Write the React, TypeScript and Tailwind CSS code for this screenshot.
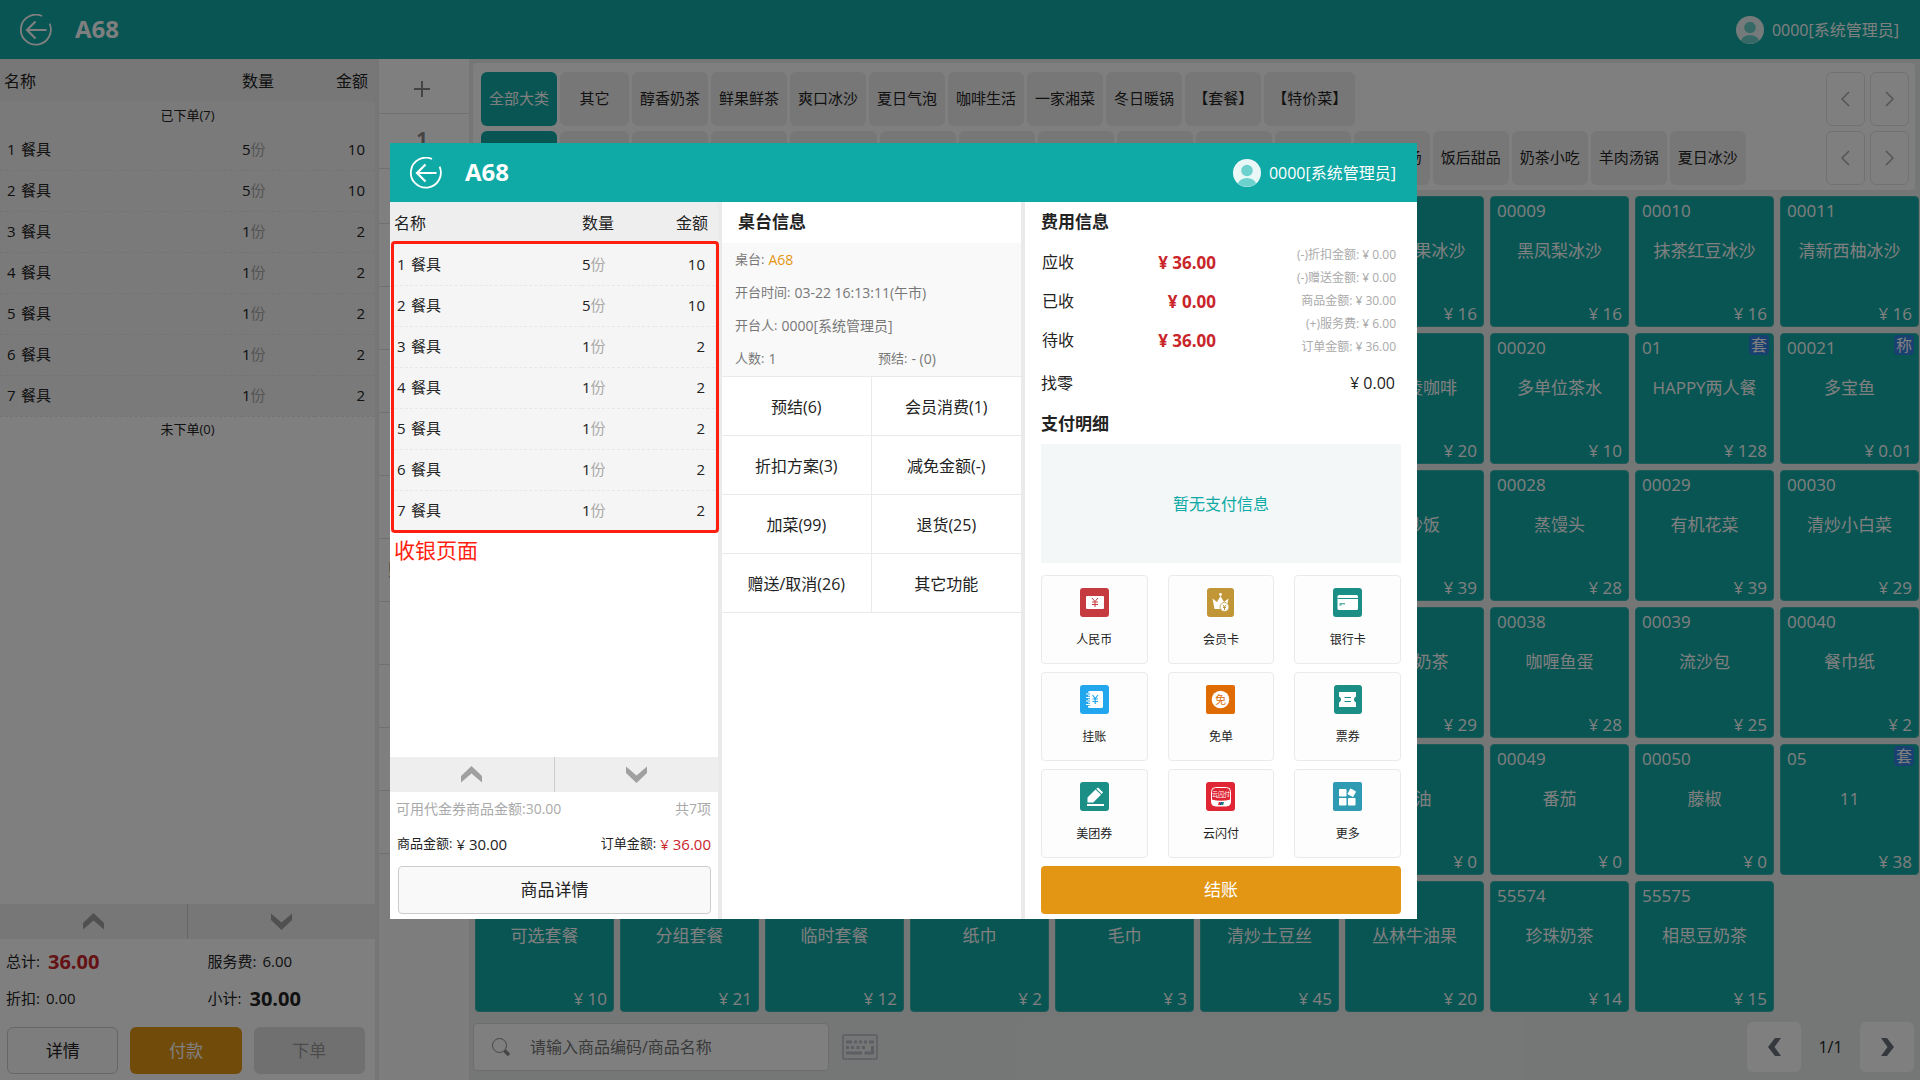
import type { ReactNode } from 'react'
import clsx from 'clsx'

const orders = [
  { name: '餐具', qty: 5, amount: 10 },
  { name: '餐具', qty: 5, amount: 10 },
  { name: '餐具', qty: 1, amount: 2 },
  { name: '餐具', qty: 1, amount: 2 },
  { name: '餐具', qty: 1, amount: 2 },
  { name: '餐具', qty: 1, amount: 2 },
  { name: '餐具', qty: 1, amount: 2 },
]

const sideActions = ['2', '3', '加料', '做法', '备注', '改价', '赠送菜品', '退菜', '催菜', '挂起', '转台']

const categories = [
  '全部大类',
  '其它',
  '醇香奶茶',
  '鲜果鲜茶',
  '爽口冰沙',
  '夏日气泡',
  '咖啡生活',
  '一家湘菜',
  '冬日暖锅',
  '【套餐】',
  '【特价菜】',
]

const subCategories = [
  '全部小类',
  '其它',
  '醇香奶茶',
  '鲜果鲜茶',
  'COOL饮品',
  '夏日气泡',
  '咖啡生活',
  '一家湘菜',
  '冬日暖锅',
  '精品小炒',
  '滋补靓汤',
  '暖胃锅汤',
  '饭后甜品',
  '奶茶小吃',
  '羊肉汤锅',
  '夏日冰沙',
]

type Dish = [code: string, name: string, price: string, tag?: string]

const dishes: Dish[] = [
  ['00002', '醇香奶茶', '12'],
  ['00003', '红豆奶茶', '13'],
  ['00004', '布丁奶茶', '13'],
  ['00005', '椰果奶茶', '13'],
  ['00006', '柠檬红茶', '12'],
  ['00007', '金桔绿茶', '12'],
  ['00008', '鲜榨芒果冰沙', '16'],
  ['00009', '黑凤梨冰沙', '16'],
  ['00010', '抹茶红豆冰沙', '16'],
  ['00011', '清新西柚冰沙', '16'],
  ['00012', '蓝柑气泡', '18'],
  ['00013', '青柠气泡', '18'],
  ['00014', '蜜桃气泡', '18'],
  ['00015', '美式咖啡', '18'],
  ['00016', '拿铁咖啡', '20'],
  ['00017', '焦糖玛奇朵', '22'],
  ['00018', '冰淇凌咖啡', '20'],
  ['00020', '多单位茶水', '10'],
  ['01', 'HAPPY两人餐', '128', '套'],
  ['00021', '多宝鱼', '0.01', '称'],
  ['00022', '小炒黄牛肉', '58'],
  ['00023', '剁椒鱼头', '68'],
  ['00024', '农家小炒肉', '39'],
  ['00025', '手撕包菜', '22'],
  ['00026', '红烧茄子', '26'],
  ['00031', '酸辣土豆丝', '20'],
  ['00027', '蛋炒饭', '39'],
  ['00028', '蒸馒头', '28'],
  ['00029', '有机花菜', '39'],
  ['00030', '清炒小白菜', '29'],
  ['00032', '羊肉汤', '48'],
  ['00033', '牛肉丸', '32'],
  ['00034', '毛肚', '36'],
  ['00035', '鸭血', '18'],
  ['00036', '虾滑', '38'],
  ['00041', '冻豆腐', '12'],
  ['00037', '原味奶茶', '29'],
  ['00038', '咖喱鱼蛋', '28'],
  ['00039', '流沙包', '25'],
  ['00040', '餐巾纸', '2'],
  ['00042', '香菜', '0'],
  ['00043', '葱花', '0'],
  ['00044', '蒜泥', '0'],
  ['00045', '小米椒', '0'],
  ['00046', '香醋', '0'],
  ['00047', '麻酱', '0'],
  ['00048', '酱油', '0'],
  ['00049', '番茄', '0'],
  ['00050', '藤椒', '0'],
  ['05', '11', '38', '套'],
  ['06', '可选套餐', '10'],
  ['07', '分组套餐', '21'],
  ['08', '临时套餐', '12'],
  ['55570', '纸巾', '2'],
  ['55571', '毛巾', '3'],
  ['55572', '清炒土豆丝', '45'],
  ['55573', '丛林牛油果', '20'],
  ['55574', '珍珠奶茶', '14'],
  ['55575', '相思豆奶茶', '15'],
]

const tableActions = [
  '预结(6)',
  '会员消费(1)',
  '折扣方案(3)',
  '减免金额(-)',
  '加菜(99)',
  '退货(25)',
  '赠送/取消(26)',
  '其它功能',
]

const feeDetails = [
  ['(-)折扣金额', '0.00'],
  ['(-)赠送金额', '0.00'],
  ['商品金额', '30.00'],
  ['(+)服务费', '6.00'],
  ['订单金额', '36.00'],
]

const payments: { label: string; icon: ReactNode }[] = [
  {
    label: '人民币',
    icon: (
      <>
        <rect width="29" height="29" rx="3" fill="#c53b3f" />
        <rect x="6" y="8" width="18" height="13" rx="1" fill="#fff" />
        <path d="M12 10l3 3.5 3-3.5M15 13.500v5.500M12 14h6M12 16.500h6" stroke="#c53b3f" fill="none" />
      </>
    ),
  },
  {
    label: '会员卡',
    icon: (
      <>
        <rect x="1" width="27" height="29" rx="3" fill="#c19637" />
        <circle cx="14.500" cy="6.500" r="1.400" fill="#fff" />
        <path d="M6.500 10.500l4.500 3.500 3.500-6 3.500 6 4.500-3.500-2 10.500h-12z" fill="#fff" />
        <circle cx="18.500" cy="19" r="4.500" fill="#fff" stroke="#c19637" strokeWidth=".8" />
        <path d="M17 17l1.500 2 1.500-2M18.500 19v3M17 19.500h3" stroke="#c19637" fill="none" />
      </>
    ),
  },
  {
    label: '银行卡',
    icon: (
      <>
        <rect width="29" height="29" rx="3" fill="#1b8e86" />
        <rect x="4.500" y="7" width="20.500" height="15" rx="1.500" fill="#fff" />
        <path d="M4.500 10.500H25M6.500 15.800h5.500M6.500 17h2" stroke="#1b8e86" fill="none" />
      </>
    ),
  },
  {
    label: '挂账',
    icon: (
      <>
        <rect width="29" height="29" rx="3" fill="#22a6ee" />
        <rect x="8" y="6" width="15" height="17" rx="1.500" fill="#fff" />
        <path d="M6 9h4M6 12.500h4M6 16h4M6 19.500h4" stroke="#22a6ee" strokeWidth="2.500" />
        <path d="M6 9h4M6 12.500h4M6 16h4M6 19.500h4" stroke="#fff" strokeWidth="1.200" />
        <path d="M12.500 10l2.700 3.500L18 10M15.200 13.500V19M12.500 14h5.500M12.500 16.500h5.500" stroke="#22a6ee" strokeWidth="1.200" fill="none" />
      </>
    ),
  },
  {
    label: '免单',
    icon: (
      <>
        <rect width="29" height="29" rx="2" fill="#df6c03" />
        <circle cx="14.500" cy="14.500" r="8.800" fill="#fff" />
        <text x="14.500" y="18.500" textAnchor="middle" fontSize="11" fill="#df6c03">
          免
        </text>
      </>
    ),
  },
  {
    label: '票券',
    icon: (
      <>
        <rect x="1" width="28" height="29" rx="3" fill="#1b8e86" />
        <path d="M6 7h17v4.500a3.200 3.200 0 0 0 0 6V22H6v-4.500a3.200 3.200 0 0 0 0-6z" fill="#fff" />
        <path d="M11.500 12.500h6.500M11.500 16.500h6.500" stroke="#1b8e86" strokeWidth="1.200" />
      </>
    ),
  },
  {
    label: '美团券',
    icon: (
      <>
        <rect width="29" height="29" rx="3" fill="#1b8e86" />
        <path d="M7.500 20.500v-5l8-8 5.500 5.200-7.800 7.800zM16.300 6.700L18 5.500l5 4.800-1.300 1.700z" fill="#fff" />
        <path d="M7 23h17" stroke="#fff" strokeWidth="2" />
      </>
    ),
  },
  {
    label: '云闪付',
    icon: (
      <>
        <rect width="29" height="29" rx="3" fill="#e02534" />
        <rect x="5.500" y="5.500" width="19" height="18.500" rx="4" fill="#e02534" stroke="#fff" />
        <path d="M5.500 17.500q9.500 2.500 19 0V20q0 4-4 4h-11q-4 0-4-4z" fill="#fff" />
        <text x="15" y="13.500" textAnchor="middle" fontSize="6" fill="#fff">
          云闪付
        </text>
        <path d="M10 15.500h10" stroke="#fff" strokeWidth=".6" />
        <path d="M12.800 20h1.800l-.8 3H12z" fill="#e02534" />
        <path d="M14.600 20h1.600l-.8 3h-1.600z" fill="#123a7c" />
        <path d="M16.200 20H18l-.8 3h-1.800z" fill="#13827e" />
      </>
    ),
  },
  {
    label: '更多',
    icon: (
      <>
        <rect width="29" height="29" rx="2" fill="#2f9bb2" />
        <rect x="6" y="7" width="7.500" height="7.500" rx=".8" fill="#fff" />
        <rect x="6" y="16" width="7.500" height="7.500" rx=".8" fill="#fff" />
        <rect x="15" y="16" width="7.500" height="7.500" rx=".8" fill="#fff" />
        <rect x="15.500" y="7.500" width="6.500" height="6.500" rx=".8" fill="#fff" transform="rotate(28 18.700 10.700)" />
      </>
    ),
  },
]

function TopBar() {
  return (
    <header className="flex h-[59px] shrink-0 items-center justify-between bg-[#10aaa6] pr-[21px] pl-5 text-white">
      <div className="flex items-center gap-[23px]">
        <button type="button" aria-label="返回">
          <svg width="32" height="32" viewBox="0 0 32 32" fill="none" stroke="currentColor" strokeWidth="1.800">
            <path d="M22 2A15 15 0 1 0 29.600 9.700" />
            <path d="M26.500 16H7.500M15.500 7.500L7 16l8.500 8.500" strokeWidth="2.200" />
          </svg>
        </button>
        <h1 className="pb-0.5 text-2xl font-bold">A68</h1>
      </div>
      <div className="flex items-center gap-2">
        <svg width="28" height="28" viewBox="0 0 28 28">
          <circle cx="14" cy="14" r="14" fill="#eaf7f7" />
          <circle cx="14" cy="11.500" r="5.800" fill="#6dd2cd" />
          <path d="M5 24.500a9.200 7 0 0 1 18 0A14 14 0 0 1 5 24.500z" fill="#6dd2cd" />
        </svg>
        <span>0000[系统管理员]</span>
      </div>
    </header>
  )
}

function OrderHead({ className }: { className: string }) {
  return (
    <thead className="bg-[#eee] text-base">
      <tr className={className}>
        <th className="pl-1 text-left font-normal">名称</th>
        <th className="w-[73px] text-left font-normal">数量</th>
        <th className="w-[60px] pr-[7px] text-right font-normal">金额</th>
      </tr>
    </thead>
  )
}

function OrderRows() {
  return orders.map((order, i) => (
    <tr key={i} className="h-[41px] border-b border-dashed border-[#e8e8e8] bg-[#f5f5f5]">
      <td className="pl-[7px]">
        <span className="inline-block w-[14px]">{i + 1}</span>
        {order.name}
      </td>
      <td>
        {order.qty}
        <span className="text-[#aaa]">份</span>
      </td>
      <td className="pr-[10px] text-right">{order.amount}</td>
    </tr>
  ))
}

function ScrollButtons() {
  return (
    <div className="flex h-[35px] shrink-0 divide-x divide-[#ccc] bg-[#eee] text-[#a0a0a0]">
      <button type="button" aria-label="上一页" className="flex flex-1 items-center justify-center">
        <svg width="21" height="17" viewBox="0 0 21 17" fill="currentColor">
          <path d="M0 10L10.500 0 21 10v6.500L10.500 7.500 0 16.500z" />
        </svg>
      </button>
      <button type="button" aria-label="下一页" className="flex flex-1 items-center justify-center">
        <svg width="21" height="17" viewBox="0 0 21 17" fill="currentColor">
          <path d="M0 .5L10.500 9.500 21 .5V7L10.500 17 0 7z" />
        </svg>
      </button>
    </div>
  )
}

function OrderPanel() {
  return (
    <section className="flex w-[379px] shrink-0 flex-col border-r-4 border-[#ececec] bg-white">
      <table className="w-full table-fixed text-[15px]">
        <OrderHead className="h-[43px]" />
        <tbody>
          <tr className="h-[27px] bg-[#f5f5f5] text-[13px]">
            <td colSpan={3} className="text-center">
              已下单(7)
            </td>
          </tr>
          <OrderRows />
          <tr className="h-[27px] text-[13px]">
            <td colSpan={3} className="text-center">
              未下单(0)
            </td>
          </tr>
        </tbody>
      </table>
      <div className="flex-1" />
      <ScrollButtons />
      <div className="grid grid-cols-2 pt-1 text-[15px]">
        <p className="flex h-[37px] items-center gap-2 pl-1.5">
          总计: <b className="text-xl text-[#c9252b]">36.00</b>
        </p>
        <p className="flex h-[37px] items-center gap-1.5 pl-5">
          服务费: <span>6.00</span>
        </p>
        <p className="flex h-[37px] items-center gap-1.5 pl-1.5">
          折扣: <span>0.00</span>
        </p>
        <p className="flex h-[37px] items-center gap-2 pl-5">
          小计: <b className="text-xl">30.00</b>
        </p>
      </div>
      <div className="grid grid-cols-3 gap-3 pt-[10px] pr-[10px] pb-1.5 pl-[7px] text-[17px]">
        <button type="button" className="h-[47px] rounded-md border border-[#ccc] bg-[#fafafa]">
          详情
        </button>
        <button type="button" className="h-[47px] rounded-md bg-[#e39614] text-white">
          付款
        </button>
        <button type="button" className="h-[47px] rounded-md bg-[#e0e0e0] text-[#999]">
          下单
        </button>
      </div>
    </section>
  )
}

function SideActions() {
  return (
    <div className="flex w-[90px] shrink-0 flex-col bg-[#fafafa] text-[17px] text-[#888]">
      <button
        type="button"
        aria-label="加"
        className="flex h-[55px] items-center justify-center border-b border-[#e0e0e0] bg-white pt-1.5 pr-1"
      >
        <svg width="16" height="16" viewBox="0 0 16 16" stroke="currentColor" strokeWidth="2">
          <path d="M8 0v16M0 8h16" />
        </svg>
      </button>
      <button type="button" className="h-[55px] border-b border-[#e0e0e0] bg-white pr-1 pb-1 text-xl font-bold">
        1
      </button>
      {sideActions.map((action, i) => (
        <button
          key={action}
          type="button"
          className={clsx('border-b border-[#e0e0e0] bg-white pr-1', i === 0 ? 'h-[55px]' : 'h-[63px]')}
        >
          {action}
        </button>
      ))}
    </div>
  )
}

function CategoryRow({ items }: { items: string[] }) {
  return (
    <div className="flex h-[54px] items-stretch gap-[5px]">
      <div className="flex flex-1 gap-[3px] text-[15px]">
        {items.map((item, i) => (
          <button
            key={item}
            type="button"
            className={clsx(
              'min-w-[69px] rounded-md px-2 pb-0.5 whitespace-nowrap',
              i === 0 ? 'bg-[#10aaa6] text-white' : 'bg-[#eee]',
            )}
          >
            {item}
          </button>
        ))}
      </div>
      {['M8 1L1 8l7 7', 'M1 1l7 7-7 7'].map((d, i) => (
        <button
          key={d}
          type="button"
          aria-label={i === 0 ? '向左' : '向右'}
          className="flex w-[39px] items-center justify-center rounded-md border border-[#e4e4e4] text-[#a8a8a8]"
        >
          <svg width="9" height="16" viewBox="0 0 9 16" fill="none" stroke="currentColor" strokeWidth="1.500">
            <path d={d} />
          </svg>
        </button>
      ))}
    </div>
  )
}

function DishCard({ dish }: { dish: Dish }) {
  const [code, name, price, tag] = dish
  return (
    <button
      type="button"
      className="relative flex h-[131px] flex-col rounded border border-[#3bb5b1] bg-[#10aaa6] text-[17px] leading-6 text-white"
    >
      <span className="self-start pt-[2px] pl-[6px]">{code}</span>
      <span className="mt-4 self-center whitespace-nowrap">{name}</span>
      <span className="mt-auto self-end pr-[6px]">¥ {price}</span>
      {tag && (
        <span className="absolute top-px right-1 h-5 w-5 rounded-sm bg-[#3080e0] text-center text-base leading-5">
          {tag}
        </span>
      )}
    </button>
  )
}

function Catalog() {
  return (
    <main className="flex min-w-0 flex-1 flex-col bg-[#ebeeed] pt-1 pl-1">
      <div className="mr-[5px] flex flex-col gap-[5px] rounded bg-white pt-[9px] pr-1.5 pb-[5px] pl-2">
        <CategoryRow items={categories} />
        <CategoryRow items={subCategories} />
      </div>
      <div className="grid grid-cols-10 gap-1.5 pt-[6px] pr-px pl-[2px]">
        {dishes.map((dish) => (
          <DishCard key={dish[0]} dish={dish} />
        ))}
      </div>
      <div className="flex items-center pt-[10px] pr-1.5 pb-2">
        <label className="flex h-12 w-[356px] items-center gap-5 rounded border border-[#dcdcdc] bg-white pl-[18px]">
          <svg width="18" height="18" viewBox="0 0 18 18" fill="none" stroke="#8a8a8a">
            <circle cx="7.500" cy="7.500" r="7" />
            <path d="M12.500 12.500l4.500 4.500" strokeWidth="3.500" />
          </svg>
          <input
            type="text"
            aria-label="商品搜索"
            placeholder="请输入商品编码/商品名称"
            className="min-w-0 flex-1 outline-none placeholder:text-[#757575]"
          />
        </label>
        <button type="button" aria-label="键盘" className="ml-[13px]">
          <svg width="36" height="26" viewBox="0 0 36 26" fill="none" stroke="#b9bcc8">
            <rect x="1" y="1" width="34" height="24" rx="1" strokeWidth="1.500" />
            <path d="M4 8h6M12 8h3M17 8h3M22 8h3M27 8h5M4 13.500h3M9 13.500h3M14.500 13.500h3M20 13.500h3M4 19h16M22.500 19H31.500M30.500 20v-8" strokeWidth="3" />
          </svg>
        </button>
        <div className="ml-auto flex items-center">
          <button type="button" aria-label="上一页" className="flex h-[50px] w-[54px] items-center justify-center rounded-md bg-white">
            <svg width="13" height="18" viewBox="0 0 13 18" fill="#6a727c">
              <path d="M7 0h6L6.500 9l6.500 9H7L0 9z" />
            </svg>
          </button>
          <span className="w-[59px] text-center">1/1</span>
          <button type="button" aria-label="下一页" className="flex h-[50px] w-[54px] items-center justify-center rounded-md bg-white">
            <svg width="13" height="18" viewBox="0 0 13 18" fill="#6a727c">
              <path d="M6 0H0l6.500 9L0 18h6l7-9z" />
            </svg>
          </button>
        </div>
      </div>
    </main>
  )
}

function CheckoutOrder() {
  return (
    <section className="flex w-[332px] shrink-0 flex-col border-r-4 border-[#eaeaea]">
      <div className="relative bg-[#eee] pr-[3px]">
        <table className="w-full table-fixed text-[15px]">
          <OrderHead className="h-[42px]" />
          <tbody>
            <OrderRows />
          </tbody>
        </table>
        <div className="pointer-events-none absolute top-[39px] -right-px -bottom-px left-px rounded border-3 border-[#ff1f10]" />
      </div>
      <p className="pt-1 pl-1 text-[21px] leading-7 text-[#ff1f10]">收银页面</p>
      <div className="flex-1" />
      <ScrollButtons />
      <div className="flex h-[34px] items-center justify-between pr-[7px] pl-1.5 text-sm text-[#aaa]">
        <span>可用代金券商品金额:30.00</span>
        <span>共7项</span>
      </div>
      <div className="flex h-10 items-center justify-between pr-[7px] pb-1 pl-[7px] text-[15px]">
        <p className="flex items-center gap-1">
          <span className="text-[13px]">商品金额:</span> ¥ 30.00
        </p>
        <p className="flex items-center gap-1 text-[#c9252b]">
          <span className="text-[13px] text-[#222]">订单金额:</span> ¥ 36.00
        </p>
      </div>
      <button type="button" className="mr-[7px] mb-[5px] ml-2 h-12 rounded border border-[#ccc] bg-[#f9f9f9] text-[17px]">
        商品详情
      </button>
    </section>
  )
}

function InfoItem({ label, children }: { label: string; children: ReactNode }) {
  return (
    <p className="flex gap-1">
      {label}: <span className="text-sm leading-[33px]">{children}</span>
    </p>
  )
}

function TableInfo() {
  return (
    <section className="flex w-[303px] shrink-0 flex-col border-r-4 border-[#eaeaea]">
      <h2 className="h-[41px] pl-4 text-[17px] leading-[40px] font-bold">桌台信息</h2>
      <div className="bg-[#f9f9f9] pb-px pl-[13px] text-[13px] leading-[33px] text-[#777]">
        <InfoItem label="桌台">
          <span className="text-[#e39614]">A68</span>
        </InfoItem>
        <InfoItem label="开台时间">03-22 16:13:11(午市)</InfoItem>
        <InfoItem label="开台人">0000[系统管理员]</InfoItem>
        <div className="grid grid-cols-2">
          <InfoItem label="人数">1</InfoItem>
          <InfoItem label="预结">- (0)</InfoItem>
        </div>
      </div>
      <div className="grid grid-cols-2 border-t border-[#eaeaea]">
        {tableActions.map((action) => (
          <button key={action} type="button" className="h-[59px] border-b border-[#eaeaea] pt-0.5 odd:border-r">
            {action}
          </button>
        ))}
      </div>
    </section>
  )
}

function Receivable({ label, value }: { label: string; value: string }) {
  return (
    <p className="flex items-center justify-between leading-[39px]">
      <span>{label}</span>
      <b className="text-[17px] text-[#c9252b]">¥ {value}</b>
    </p>
  )
}

function Payment() {
  return (
    <section className="flex min-w-0 flex-1 flex-col px-4 pb-[5px]">
      <h2 className="h-[41px] text-[17px] leading-[40px] font-bold">费用信息</h2>
      <div className="flex h-[120px] justify-between pr-[5px] pl-px">
        <div className="w-[174px]">
          <Receivable label="应收" value="36.00" />
          <Receivable label="已收" value="0.00" />
          <Receivable label="待收" value="36.00" />
        </div>
        <div className="text-right text-xs leading-[23px] text-[#aaa]">
          {feeDetails.map(([label, value]) => (
            <p key={label}>
              {label}: ¥ {value}
            </p>
          ))}
        </div>
      </div>
      <p className="flex justify-between pr-1.5 leading-[40px]">
        <span>找零</span>
        <span>¥ 0.00</span>
      </p>
      <h2 className="text-[17px] leading-[41px] font-bold">支付明细</h2>
      <div className="flex h-[119px] items-center justify-center bg-[#f3f7f8] text-[#10aaa6]">暂无支付信息</div>
      <div className="mt-3 grid grid-cols-3 gap-x-5 gap-y-2">
        {payments.map((payment) => (
          <button
            key={payment.label}
            type="button"
            className="flex h-[89px] flex-col items-center rounded border border-[#eaeaea] bg-[#fdfdfd] pt-3 text-xs"
          >
            <svg width="29" height="29" viewBox="0 0 29 29">
              {payment.icon}
            </svg>
            <span className="pt-[15px]">{payment.label}</span>
          </button>
        ))}
      </div>
      <button type="button" className="mt-auto h-12 rounded bg-[#e39614] text-[17px] text-white">
        结账
      </button>
    </section>
  )
}

export default function App() {
  return (
    <div className="relative flex min-h-screen flex-col font-['Open_Sans','Noto_Sans_CJK_SC',sans-serif] text-base text-[#222]">
      <TopBar />
      <div className="flex flex-1">
        <OrderPanel />
        <SideActions />
        <Catalog />
      </div>

      <div className="absolute inset-0 flex bg-black/50 pt-[143px] pr-[503px] pb-[161px] pl-[390px]">
        <div role="dialog" aria-label="收银" className="flex min-w-0 flex-1 flex-col bg-white">
          <TopBar />
          <div className="flex min-h-0 flex-1">
            <CheckoutOrder />
            <TableInfo />
            <Payment />
          </div>
        </div>
      </div>
    </div>
  )
}
